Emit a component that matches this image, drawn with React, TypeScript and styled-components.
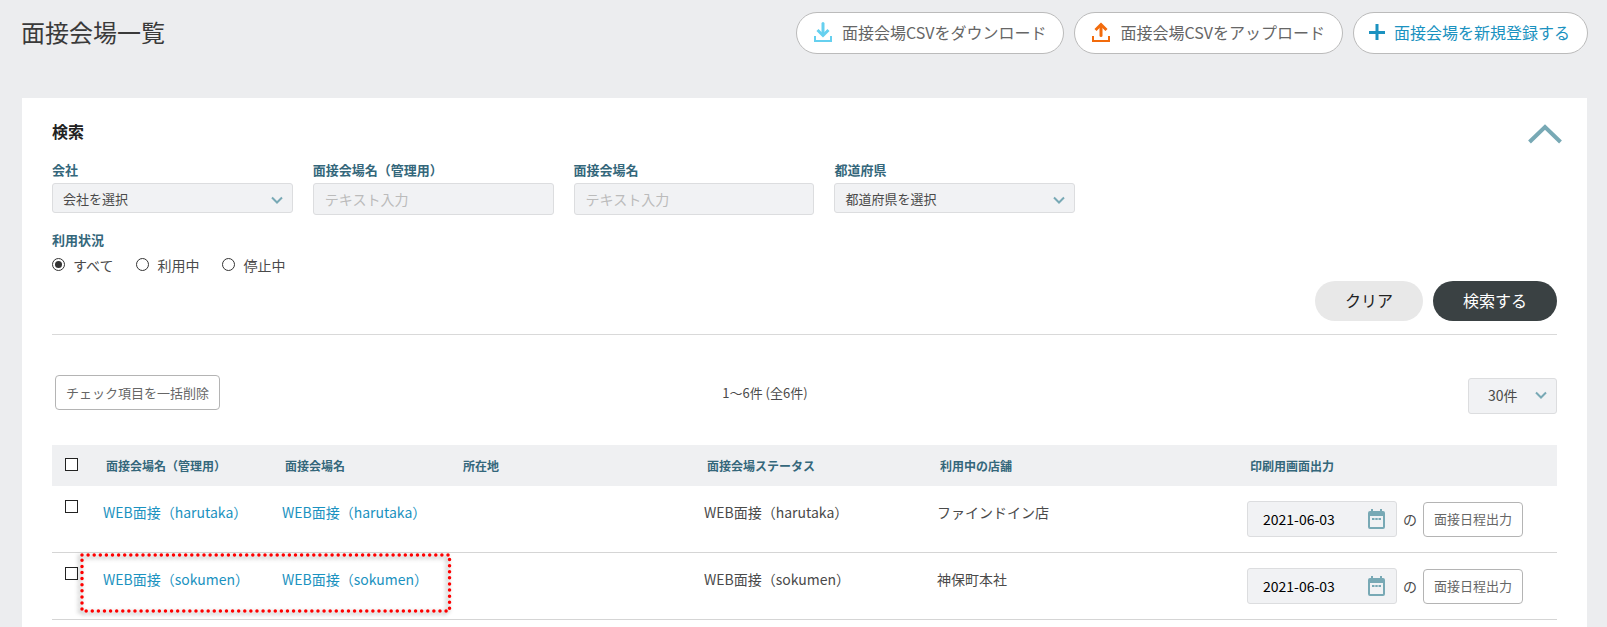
import React from "react";
import styled, { createGlobalStyle, css } from "styled-components";

const GlobalStyle = createGlobalStyle`
  *, *::before, *::after { box-sizing: border-box; }
  body {
    margin: 0;
    background: #ecedef;
    color: #4a4a4a;
    font-family: "Noto Sans CJK JP", "Noto Sans", sans-serif;
    font-size: 14px;
    line-height: 20px;
  }
  button, input, select { font: inherit; color: inherit; margin: 0; }
  button { cursor: pointer; }
`;

const Page = styled.div`
  display: flex;
  flex-direction: column;
  min-height: 100vh;
`;

const Header = styled.header`
  display: flex;
  justify-content: space-between;
  align-items: flex-start;
  padding: 12px 19px 44px 21px;
`;

const Title = styled.h1`
  margin: 0;
  font-size: 24px;
  line-height: 40px;
  font-weight: 400;
  color: #3a3a3a;
`;

const HeaderActions = styled.div`
  display: flex;
  gap: 10px;
`;

const PillButton = styled.button<{ $primary?: boolean }>`
  display: flex;
  align-items: center;
  gap: ${(p) => (p.$primary ? 9 : 10)}px;
  height: 42px;
  padding: ${(p) => (p.$primary ? "0 17px 2px 15px" : "0 17px 2px")};
  border: 1px solid #bbb;
  border-radius: 21px;
  background: #fff;
  font-size: 16px;
  line-height: 24px;
  white-space: nowrap;
  color: ${(p) => (p.$primary ? "#1b92c0" : "#666")};
`;

const Panel = styled.main`
  flex: 1;
  margin: 0 20px 0 22px;
  padding: 20px 30px 7px;
  background: #fff;
`;

const SearchForm = styled.form`
  padding-bottom: 13px;
  border-bottom: 1px solid #d9d9d9;
`;

const SearchHead = styled.div`
  display: flex;
  justify-content: space-between;
  align-items: flex-start;
  height: 26px;
  margin-bottom: 16px;
`;

const SearchTitle = styled.h2`
  margin: 0;
  font-size: 16px;
  line-height: 26px;
  font-weight: 700;
  color: #222;
`;

const CollapseButton = styled.button`
  display: flex;
  padding: 6px 0 0;
  margin-right: -5px;
  border: 0;
  background: none;
`;

const Fields = styled.div`
  display: flex;
  align-items: flex-start;
  gap: 20px;
`;

const Field = styled.div`
  width: 16%;
`;

const labelText = css`
  display: block;
  padding: 0;
  font-size: 13px;
  line-height: 20px;
  font-weight: 700;
  color: #34677b;
`;

const FieldLabel = styled.label`
  ${labelText}
  margin-bottom: 3px;
`;

const controlBox = css`
  display: block;
  width: 100%;
  border: 1px solid #dcdddf;
  border-radius: 3px;
  background: #f1f2f4;
`;

const TextInput = styled.input`
  ${controlBox}
  height: 32px;
  padding: 0 11px;
  &::placeholder { color: #bbb; opacity: 1; }
`;

const SelectWrap = styled.div`
  position: relative;
  svg {
    position: absolute;
    top: 11px;
    right: 10px;
    pointer-events: none;
  }
`;

const Select = styled.select<{ $large?: boolean }>`
  ${controlBox}
  appearance: none;
  height: ${(p) => (p.$large ? 36 : 30)}px;
  padding: ${(p) => (p.$large ? "0 37px 2px 19px" : "2px 28px 0 10px")};
  font-size: ${(p) => (p.$large ? 14 : 13)}px;
`;

const StatusGroup = styled.fieldset`
  margin: 15px 0 6px;
  padding: 0;
  border: 0;
`;

const StatusLegend = styled.legend`
  ${labelText}
  margin-bottom: 5px;
`;

const RadioList = styled.div`
  display: flex;
  gap: 23px;
`;

const RadioLabel = styled.label`
  display: flex;
  align-items: flex-start;
  gap: 8px;
`;

const Radio = styled.input`
  appearance: none;
  width: 13px;
  height: 13px;
  && { margin-top: 3px; }
  border: 1px solid #333;
  border-radius: 50%;
  background: #fff;
  &:checked {
    background: #333;
    background-clip: content-box;
    padding: 2px;
  }
`;

const FormActions = styled.div`
  display: flex;
  justify-content: flex-end;
  gap: 10px;
`;

const RoundButton = styled.button<{ $dark?: boolean }>`
  height: 40px;
  padding: 0 30px 2px;
  border: 0;
  border-radius: 20px;
  background: ${(p) => (p.$dark ? "#3a4143" : "#e8e8e8")};
  color: ${(p) => (p.$dark ? "#fff" : "#222")};
  font-size: 16px;
`;

const ListBar = styled.div`
  display: grid;
  grid-template-columns: 8fr 2fr 9fr;
  align-items: start;
  padding: 40px 0 31px;
`;

const OutlineButton = styled.button`
  height: 35px;
  padding: 0 10px;
  border: 1px solid #b4b4b4;
  border-radius: 4px;
  background: #fff;
  color: #666;
  font-size: 13px;
  white-space: nowrap;
`;

const BulkCell = styled.div`
  padding-left: 3px;
`;

const Count = styled.p`
  margin: 0;
  font-size: 13px;
  line-height: 36px;
  text-align: center;
  white-space: nowrap;
`;

const PageSize = styled.div`
  justify-self: end;
  width: 89px;
  margin-top: 3px;
`;

const Table = styled.table`
  width: 100%;
  table-layout: fixed;
  border-collapse: separate;
  border-spacing: 0;
`;

const HeadCell = styled.th`
  height: 41px;
  padding: 1px 13px 0;
  background: #eff0f2;
  font-size: 12px;
  font-weight: 700;
  text-align: left;
  color: #34677b;
`;

const HeadCheckCell = styled(HeadCell)`
  padding: 0 13px 2px;
`;

const Row = styled.tr`
  position: relative;
`;

const Cell = styled.td`
  padding: 15px 10px;
  border-bottom: 1px solid #d5d5d5;
  vertical-align: top;
  line-height: 22px;
`;

const Checkbox = styled.input`
  appearance: none;
  display: block;
  width: 13px;
  height: 13px;
  border: 1px solid #222;
  background: #fff;
`;

const CheckCell = styled(Cell)`
  padding: 14px 13px;
`;

const VenueLink = styled.a`
  color: #1b92c0;
  text-decoration: none;
`;

const Output = styled.div`
  display: flex;
  align-items: center;
  gap: 6px;
`;

const DateField = styled.div`
  position: relative;
  width: 150px;
  svg {
    position: absolute;
    top: 8px;
    right: 12px;
  }
`;

const DateInput = styled.input`
  ${controlBox}
  height: 36px;
  padding: 0 36px 0 15px;
  color: #000;
`;

const Highlight = styled.svg`
  position: absolute;
  top: 0;
  left: 28px;
  width: calc(25% - 5px);
  height: 62px;
  overflow: visible;
  filter: drop-shadow(-2px 2px 2px rgba(0, 0, 0, 0.4));
  pointer-events: none;
`;

const DownloadIcon = () => (
  <svg width="18" height="20" viewBox="0 0 18 20" fill="none" stroke="#66d0ef" aria-hidden="true">
    <path d="M1 14v5h16v-5" strokeWidth="2" />
    <path d="M9 1.500v11" strokeWidth="3" strokeLinecap="round" />
    <path d="M3.500 8L9 13.500 14.500 8" strokeWidth="3" />
  </svg>
);

const UploadIcon = () => (
  <svg width="18" height="20" viewBox="0 0 18 20" fill="none" stroke="#f26b0c" aria-hidden="true">
    <path d="M1 14v5h16v-5" strokeWidth="2" />
    <path d="M9 13.500v-10" strokeWidth="3" strokeLinecap="round" />
    <path d="M3.500 8L9 2.500 14.500 8" strokeWidth="3" />
  </svg>
);

const PlusIcon = () => (
  <svg width="16" height="16" viewBox="0 0 16 16" stroke="#1b92c0" strokeWidth="3" aria-hidden="true">
    <path d="M8 0v16M0 8.500h16" />
  </svg>
);

const ChevronUp = () => (
  <svg width="34" height="20" viewBox="0 0 34 20" fill="none" stroke="#78a9b5" strokeWidth="4" aria-hidden="true">
    <path d="M1.500 18L17 3l15.500 15" />
  </svg>
);

const ChevronDown = () => (
  <svg width="12" height="12" viewBox="0 0 12 12" fill="none" stroke="#78a9b5" strokeWidth="2" aria-hidden="true">
    <path d="M1 3.500l5 5 5-5" />
  </svg>
);

const CalendarIcon = () => (
  <svg width="17" height="20" viewBox="0 0 17 20" fill="#78a9b5" aria-hidden="true">
    <path
      fillRule="evenodd"
      d="M3 0h2v2h7V0h2v2h1a2 2 0 0 1 2 2v14a2 2 0 0 1-2 2H2a2 2 0 0 1-2-2V4a2 2 0 0 1 2-2h1zM2 7v11h13V7z"
    />
    <path d="M4 9h2.500v2H4zM7.300 9h2.400v2H7.300zM10.500 9H13v2h-2.500z" />
  </svg>
);

const columnWidths = [41, 179, 178, 244, 233, 310, 320];
const headings = [
  "面接会場名（管理用）",
  "面接会場名",
  "所在地",
  "面接会場ステータス",
  "利用中の店舗",
  "印刷用画面出力",
];
const venues = [
  { name: "WEB面接（harutaka）", shop: "ファインドイン店", date: "2021-06-03", highlighted: false },
  { name: "WEB面接（sokumen）", shop: "神保町本社", date: "2021-06-03", highlighted: true },
];

export default function App() {
  return (
    <Page>
      <GlobalStyle />
      <Header>
        <Title>面接会場一覧</Title>
        <HeaderActions>
          <PillButton type="button">
            <DownloadIcon />
            面接会場CSVをダウンロード
          </PillButton>
          <PillButton type="button">
            <UploadIcon />
            面接会場CSVをアップロード
          </PillButton>
          <PillButton type="button" $primary>
            <PlusIcon />
            面接会場を新規登録する
          </PillButton>
        </HeaderActions>
      </Header>

      <Panel>
        <SearchForm onSubmit={(e) => e.preventDefault()}>
          <SearchHead>
            <SearchTitle>検索</SearchTitle>
            <CollapseButton type="button" aria-label="検索条件を閉じる">
              <ChevronUp />
            </CollapseButton>
          </SearchHead>

          <Fields>
            <Field>
              <FieldLabel htmlFor="company">会社</FieldLabel>
              <SelectWrap>
                <Select id="company">
                  <option>会社を選択</option>
                </Select>
                <ChevronDown />
              </SelectWrap>
            </Field>
            <Field>
              <FieldLabel htmlFor="admin-name">面接会場名（管理用）</FieldLabel>
              <TextInput id="admin-name" type="text" placeholder="テキスト入力" />
            </Field>
            <Field>
              <FieldLabel htmlFor="venue-name">面接会場名</FieldLabel>
              <TextInput id="venue-name" type="text" placeholder="テキスト入力" />
            </Field>
            <Field>
              <FieldLabel htmlFor="prefecture">都道府県</FieldLabel>
              <SelectWrap>
                <Select id="prefecture">
                  <option>都道府県を選択</option>
                </Select>
                <ChevronDown />
              </SelectWrap>
            </Field>
          </Fields>

          <StatusGroup>
            <StatusLegend>利用状況</StatusLegend>
            <RadioList>
              {["すべて", "利用中", "停止中"].map((status, i) => (
                <RadioLabel key={status}>
                  <Radio type="radio" name="status" defaultChecked={i === 0} />
                  {status}
                </RadioLabel>
              ))}
            </RadioList>
          </StatusGroup>

          <FormActions>
            <RoundButton type="reset">クリア</RoundButton>
            <RoundButton type="submit" $dark>
              検索する
            </RoundButton>
          </FormActions>
        </SearchForm>

        <ListBar>
          <BulkCell>
            <OutlineButton type="button">チェック項目を一括削除</OutlineButton>
          </BulkCell>
          <Count>1〜6件 (全6件)</Count>
          <PageSize>
            <SelectWrap>
              <Select $large aria-label="表示件数">
                <option>30件</option>
              </Select>
              <ChevronDown />
            </SelectWrap>
          </PageSize>
        </ListBar>

        <Table>
          <colgroup>
            {columnWidths.map((width, i) => (
              <col key={i} width={width} />
            ))}
          </colgroup>
          <thead>
            <tr>
              <HeadCheckCell>
                <Checkbox type="checkbox" aria-label="すべて選択" />
              </HeadCheckCell>
              {headings.map((heading) => (
                <HeadCell key={heading} scope="col">
                  {heading}
                </HeadCell>
              ))}
            </tr>
          </thead>
          <tbody>
            {venues.map((venue) => (
              <Row key={venue.name}>
                <CheckCell>
                  <Checkbox type="checkbox" aria-label={venue.name} />
                  {venue.highlighted && (
                    <Highlight aria-hidden="true">
                      <rect
                        x="2"
                        y="2"
                        width="99%"
                        height="56"
                        fill="none"
                        stroke="#f00"
                        strokeWidth="3.5"
                        strokeLinecap="round"
                        strokeDasharray="0 6.1"
                      />
                    </Highlight>
                  )}
                </CheckCell>
                <Cell>
                  <VenueLink href="#">{venue.name}</VenueLink>
                </Cell>
                <Cell>
                  <VenueLink href="#">{venue.name}</VenueLink>
                </Cell>
                <Cell />
                <Cell>{venue.name}</Cell>
                <Cell>{venue.shop}</Cell>
                <Cell>
                  <Output>
                    <DateField>
                      <DateInput type="text" defaultValue={venue.date} aria-label="出力日" />
                      <CalendarIcon />
                    </DateField>
                    の
                    <OutlineButton type="button">面接日程出力</OutlineButton>
                  </Output>
                </Cell>
              </Row>
            ))}
          </tbody>
        </Table>
      </Panel>
    </Page>
  );
}
